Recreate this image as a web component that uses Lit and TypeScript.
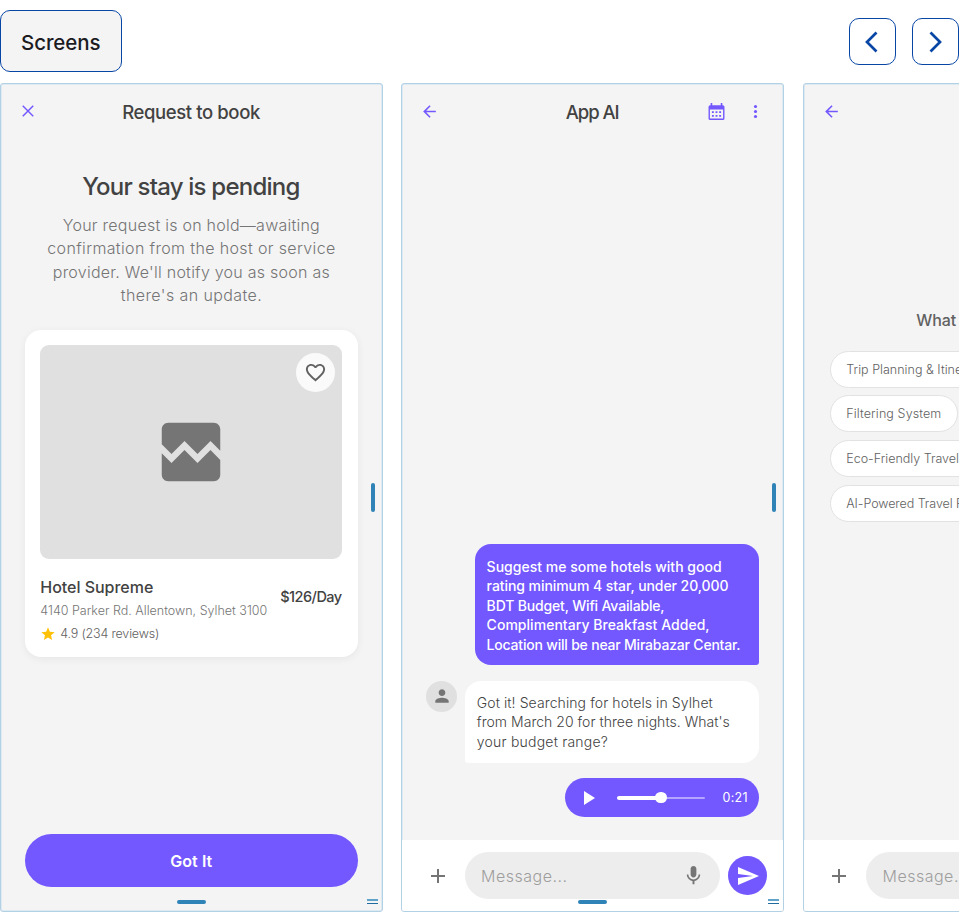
import { LitElement, html, css, svg } from "lit";
import { customElement, property } from "lit/decorators.js";

/** A single line of text whose tracking is adjusted to fill a given width. */
@customElement("text-line")
class TextLine extends LitElement {
  @property({ type: Number }) w = 0;
  static styles = css`
    :host { display: block; white-space: nowrap; }
    span { display: inline-block; }
  `;
  render() {
    return html`<span><slot></slot></span>`;
  }
  firstUpdated() {
    const span = this.renderRoot.querySelector("span") as HTMLElement;
    const n = (this.textContent || "").trim().length;
    this.style.width = this.w + "px";
    const natural = span.getBoundingClientRect().width;
    span.style.letterSpacing = (this.w - natural) / Math.max(1, n - 1) + "px";
  }
}

const icon = (name: string, size: number, body: unknown, box = "0 0 24 24") =>
  html`<svg class="ic ${name}" width=${size} height=${size} viewBox=${box} fill="currentColor">${body}</svg>`;

const ICONS = {
  close: svg`<path d="M5 5 19 19M19 5 5 19" stroke="currentColor" stroke-width="1.9" fill="none"/>`,
  back: svg`<path d="M20 11H7.83l5.59-5.59L12 4l-8 8 8 8 1.41-1.41L7.83 13H20z"/>`,
  dots: svg`<circle cx="12" cy="5" r="2.2"/><circle cx="12" cy="12" r="2.2"/><circle cx="12" cy="19" r="2.2"/>`,
  heart: svg`<path d="M16.5 3c-1.74 0-3.41.81-4.5 2.09C10.91 3.81 9.24 3 7.5 3 4.42 3 2 5.42 2 8.5c0 3.78 3.4 6.86 8.55 11.54L12 21.35l1.45-1.32C18.6 15.36 22 12.28 22 8.5 22 5.42 19.58 3 16.5 3m-4.4 15.55-.1.1-.1-.1C7.14 14.24 4 11.39 4 8.5 4 6.5 5.5 5 7.5 5c1.54 0 3.04.99 3.57 2.36h1.87C13.46 5.99 14.96 5 16.5 5c2 0 3.5 1.5 3.5 3.5 0 2.89-3.14 5.74-7.9 10.05"/>`,
  broken: svg`<path d="M21 5v6.59l-3-3.01-4 4.01-4-4-4 4-3-3.01V5c0-1.1.9-2 2-2h14c1.1 0 2 .9 2 2m-3 6.42 3 3.01V19c0 1.1-.9 2-2 2H5c-1.1 0-2-.9-2-2v-6.58l3 2.99 4-4 4 4z"/>`,
  star: svg`<path d="M12 17.27 18.18 21l-1.64-7.03L22 9.24l-7.19-.61L12 2 9.19 8.63 2 9.24l5.46 4.73L5.82 21z"/>`,
  person: svg`<path d="M12 12c2.21 0 4-1.79 4-4s-1.79-4-4-4-4 1.79-4 4 1.79 4 4 4m0 2c-2.67 0-8 1.34-8 4v2h16v-2c0-2.66-5.33-4-8-4"/>`,
  play: svg`<path d="M8 5v14l11-7z"/>`,
  plus: svg`<path d="M19 13h-6v6h-2v-6H5v-2h6V5h2v6h6z"/>`,
  mic: svg`<path d="M12 14c1.66 0 2.99-1.34 2.99-3L15 5c0-1.66-1.34-3-3-3S9 3.34 9 5v6c0 1.66 1.34 3 3 3m5.3-3c0 3-2.54 5.1-5.3 5.1S6.7 14 6.7 11H5c0 3.41 2.72 6.23 6 6.72V21h2v-3.28c3.28-.48 6-3.3 6-6.72z"/>`,
  send: svg`<path d="M2.01 21 23 12 2.01 3 2 10l15 2-15 2z"/>`,
  left: svg`<path d="M11.5 1.5 2 11 11.5 20.5" stroke="currentColor" stroke-width="2.7" fill="none"/>`,
  right: svg`<path d="M2.5 1.5 12 11 2.5 20.5" stroke="currentColor" stroke-width="2.7" fill="none"/>`,
  calendar: svg`<path fill-rule="evenodd" d="M2 0h1.5v2h8V0H13v2h.5A1.5 1.5 0 0 1 15 3.5V14.5A1.5 1.5 0 0 1 13.5 16H1.5A1.5 1.5 0 0 1 0 14.5V3.5A1.5 1.5 0 0 1 1.5 2H2zM1.3 6V14.7H13.7V6zM3.2 7.700h1.8v1.8H3.2zM6.6 7.700h1.8v1.8H6.6zM10 7.700h1.8v1.8H10zM3.2 11.200H5v1.8H3.2zM6.6 11.200h1.8v1.8H6.6zM10 11.200h1.8v1.8H10z"/>`,
};

@customElement("app-root")
class AppRoot extends LitElement {
  static styles = css`
    * { box-sizing: border-box; }
    :host {
      display: block; width: 959px; height: 912px; overflow: hidden; background: #fff;
      font-family: Inter, "Open Sans", sans-serif; color: #424242;
    }
    .ic { display: block; flex: none; }
    .top { display: flex; height: 83px; padding-top: 10px; gap: 15.5px; align-items: flex-start; }
    .title { width: 122px; height: 62.4px; border: 1.3px solid #0846a6; border-radius: 10px; background: #f4f4f4;
      padding-left: 20px; font-size: 20.5px; line-height: 64px; font-weight: 500; color: #1c1b1f; margin-right: auto; }
    .nav { width: 47.3px; height: 47px; margin-top: 8px; border: 1.3px solid #0846a6; border-radius: 10px; color: #0846a6; display: grid; place-items: center; }
    .nav .ic { margin-right: 1px; }
    .row { display: flex; gap: 18.9px; width: 1190px; }
    .panel { position: relative; width: 382.5px; height: 829px; flex: none; border: 1px solid #b3d1e5; border-radius: 3px;
      box-shadow: inset 0 0 0 .5px #c8dfee; background: #f4f4f4; display: flex; flex-direction: column; overflow: hidden; }
    .bar { height: 54px; display: grid; grid-template-columns: 120px 1fr 120px; align-items: center; color: #7357ff; flex: none; }
    .bar .ic.lead { margin-left: 18px; }
    .bar .h { justify-self: center; color: #424242; font-size: 18.5px; line-height: 24px; font-weight: 500; margin-top: 2px; }
    .actions { display: flex; justify-content: flex-end; align-items: center; gap: 22px; padding-right: 18.8px; }
    .side { position: absolute; right: 7px; top: 399px; width: 4px; height: 29px; border-radius: 2px; background: #2f83b7; }
    .foot { position: absolute; left: 175.5px; bottom: 7px; width: 29.5px; height: 4px; border-radius: 2px; background: #2f83b7; }
    .grip { position: absolute; right: 3.5px; bottom: 7px; width: 11px; height: 5px; border-top: 2px solid #5fa2ca; border-bottom: 1px solid #1f6d9e; }
    .center { display: flex; flex-direction: column; align-items: center; }
    .big { margin-top: 33px; font-size: 24px; line-height: 32px; font-weight: 500; }
    .para { margin-top: 10.5px; font-size: 16px; line-height: 23.5px; color: #757575; font-weight: 350; }
    .card { margin: 22.2px 23.8px 0; height: 327px; border-radius: 16px; background: #fff; padding: 15.5px 15.5px 0; box-shadow: 0 2px 8px rgba(0,0,0,.06); }
    .photo { position: relative; height: 214px; border-radius: 9px; background: #e0e0e0; color: #757575; display: grid; place-items: center; }
    .fav { position: absolute; right: 7.5px; top: 7.5px; width: 39px; height: 39px; border-radius: 50%; background: #fafafa; color: #616161; display: grid; place-items: center; }
    .info { display: flex; justify-content: space-between; margin-top: 17px; }
    .name { font-size: 16px; line-height: 22px; font-weight: 500; }
    .addr { font-size: 12.5px; line-height: 18px; margin-top: 4px; color: #757575; font-weight: 350; }
    .rate { display: flex; align-items: center; gap: 4px; margin-top: 5px; font-size: 12.5px; line-height: 18px; color: #616161; font-weight: 350; }
    .rate .ic { color: #ffc107; }
    .price { font-size: 14.5px; line-height: 20px; font-weight: 500; margin-top: 11px; }
    .cta { margin: auto 23.8px 24px; height: 53.5px; border-radius: 27px; background: #7357ff; color: #fff; display: grid; place-items: center;
      font-size: 16px; line-height: 24px; font-weight: 600; padding-top: 1px; }
    .chat { flex: 1; display: flex; flex-direction: column; justify-content: flex-end; align-items: flex-end; padding: 0 23.8px 23px; }
    .me { width: 284px; height: 120.5px; border-radius: 16px 16px 3px 16px; background: #7357ff; color: #fff; padding: 12.8px 11.5px; font-size: 14px; line-height: 19.5px; font-weight: 500; }
    .reply { display: flex; gap: 8px; margin: 16px 0 15.5px; }
    .avatar { width: 31px; height: 31px; border-radius: 50%; background: #e0e0e0; color: #757575; display: grid; place-items: center; }
    .bot { width: 294px; height: 82px; border-radius: 16px 16px 16px 3px; background: #fff; padding: 12.4px 11.7px; font-size: 14px; line-height: 19.5px; font-weight: 350; }
    .voice { width: 194.5px; height: 39px; border-radius: 20px; background: #7357ff; color: #fff; display: flex; align-items: center; padding: 0 11.5px; font-size: 12.5px; }
    .track { position: relative; width: 88px; flex: none; height: 2px; background: #b5a5ff; margin: 0 17.5px 0 17px; border-radius: 1px; }
    .track .on { position: absolute; left: 0; top: -1px; width: 44px; height: 4px; border-radius: 2px; background: #fff; }
    .track .knob { position: absolute; left: 38.3px; top: -4.7px; width: 11.4px; height: 11.4px; border-radius: 50%; background: #fff; }
    .compose { height: 71px; background: #fff; display: flex; align-items: center; padding-left: 23.7px; color: #757575; flex: none; }
    .field { width: 255px; height: 47px; border-radius: 24px; background: #ededed; margin: 0 8px 0 15px; padding: 0 15.5px 0 16px; display: flex; justify-content: space-between; align-items: center; font-size: 16px; font-weight: 350; }
    .field text-line { color: #9e9e9e; margin-top: 1px; }
    .go { width: 39px; height: 39px; border-radius: 50%; background: #7357ff; color: #fff; display: grid; place-items: center; }
    .ask { margin: 170px 0 0 112.5px; font-size: 16px; line-height: 24px; font-weight: 500; color: #616161; }
    .chips { display: flex; flex-direction: column; align-items: flex-start; gap: 7.8px; margin: 18.7px 0 0 26.2px; flex: 1; }
    .chip { height: 37px; border: 1px solid #e2e2e2; border-radius: 19px; background: #fff; padding: 0 15.5px 0 15.3px; font-size: 12.5px; line-height: 35.5px; color: #616161; font-weight: 350; }
  `;

  lines(items: [string, number][]) {
    return items.map(([t, w]) => html`<text-line .w=${w}>${t}</text-line>`);
  }

  handles() {
    return html`<div class="side"></div><div class="foot"></div><div class="grip"></div>`;
  }

  compose() {
    return html`<div class="compose">
      ${icon("add", 24, ICONS.plus)}
      <div class="field"><text-line .w=${86}>Message...</text-line>${icon("mic", 23, ICONS.mic)}</div>
      <div class="go">${icon("send", 24, ICONS.send)}</div>
    </div>`;
  }

  render() {
    return html`
      <div class="top">
        <div class="title"><text-line .w=${79.5}>Screens</text-line></div>
        <div class="nav">${icon("l", 22, ICONS.left, "-4 0 22 22")}</div>
        <div class="nav">${icon("r", 22, ICONS.right, "-4 0 22 22")}</div>
      </div>
      <div class="row">
        <section class="panel">
          <div class="bar">
            ${icon("lead", 18, ICONS.close)}
            <text-line class="h" .w=${138}>Request to book</text-line>
          </div>
          <div class="center big">${this.lines([["Your stay is pending", 218]])}</div>
          <div class="center para">${this.lines([
            ["Your request is on hold—awaiting", 257],
            ["confirmation from the host or service", 288],
            ["provider. We'll notify you as soon as", 277],
            ["there's an update.", 141],
          ])}</div>
          <div class="card">
            <div class="photo">
              ${icon("broken", 78, ICONS.broken)}
              <div class="fav">${icon("heart", 23, ICONS.heart)}</div>
            </div>
            <div class="info">
              <div>
                <text-line class="name" .w=${113}>Hotel Supreme</text-line>
                <text-line class="addr" .w=${227}>4140 Parker Rd. Allentown, Sylhet 3100</text-line>
                <div class="rate">${icon("star", 16, ICONS.star)}<text-line .w=${99}>4.9 (234 reviews)</text-line></div>
              </div>
              <text-line class="price" .w=${62}>$126/Day</text-line>
            </div>
          </div>
          <div class="cta"><text-line .w=${42}>Got It</text-line></div>
          ${this.handles()}
        </section>

        <section class="panel">
          <div class="bar">
            ${icon("lead", 19, ICONS.back)}
            <text-line class="h" .w=${54}>App AI</text-line>
            <div class="actions">${icon("cal", 17, ICONS.calendar, "0 0 15 16")}${icon("more", 17, ICONS.dots)}</div>
          </div>
          <div class="chat">
            <div class="me">${this.lines([
              ["Suggest me some hotels with good", 235],
              ["rating minimum 4 star, under 20,000", 242],
              ["BDT Budget, Wifi Available,", 178],
              ["Complimentary Breakfast Added,", 223],
              ["Location will be near Mirabazar Centar.", 254],
            ])}</div>
            <div class="reply">
              <div class="avatar">${icon("person", 20, ICONS.person)}</div>
              <div class="bot">${this.lines([
                ["Got it! Searching for hotels in Sylhet", 236],
                ["from March 20 for three nights. What's", 253],
                ["your budget range?", 131],
              ])}</div>
            </div>
            <div class="voice">
              ${icon("play", 24, ICONS.play)}
              <div class="track"><div class="on"></div><div class="knob"></div></div>
              <text-line .w=${25}>0:21</text-line>
            </div>
          </div>
          ${this.compose()}
          ${this.handles()}
        </section>

        <section class="panel">
          <div class="bar">${icon("lead", 19, ICONS.back)}</div>
          <div class="ask"><text-line .w=${40}>What</text-line></div>
          <div class="chips">
            <div class="chip"><text-line .w=${139}>Trip Planning &amp; Itinerary</text-line></div>
            <div class="chip"><text-line .w=${95}>Filtering System</text-line></div>
            <div class="chip"><text-line .w=${141}>Eco-Friendly Travel Tips</text-line></div>
            <div class="chip"><text-line .w=${141}>AI-Powered Travel Plans</text-line></div>
          </div>
          ${this.compose()}
          ${this.handles()}
        </section>
      </div>
    `;
  }
}
